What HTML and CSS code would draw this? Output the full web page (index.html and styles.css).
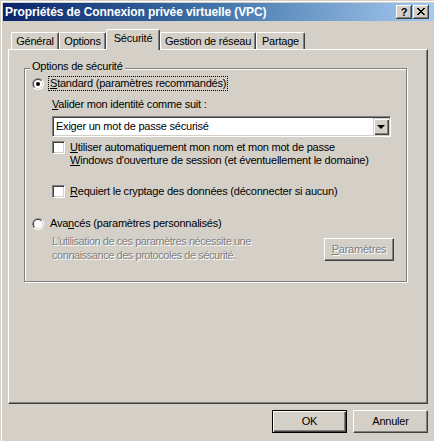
FILE: index.html
```html
<!DOCTYPE html>
<html lang="fr">
<head>
<meta charset="utf-8">
<title>Propriétés de Connexion privée virtuelle (VPC)</title>
<link rel="stylesheet" href="styles.css">
</head>
<body>
<div class="window">
  <div class="titlebar">
    <span class="title">Propriétés de Connexion privée virtuelle (VPC)</span>
    <div class="caption-btns">
      <span class="cbtn help">?</span>
      <span class="cbtn close"><svg width="8" height="7" viewBox="0 0 8 7" shape-rendering="crispEdges"><path d="M0 0h2v1h-2zM6 0h2v1h-2zM1 1h2v1h-2zM5 1h2v1h-2zM2 2h4v1h-4zM3 3h2v1h-2zM2 4h4v1h-4zM1 5h2v1h-2zM5 5h2v1h-2zM0 6h2v1h-2zM6 6h2v1h-2z" fill="#000"/></svg></span>
    </div>
  </div>

  <div class="tabs">
    <div class="tab t1">Général</div>
    <div class="tab t2">Options</div>
    <div class="tab t3 selected">Sécurité</div>
    <div class="tab t4">Gestion de réseau</div>
    <div class="tab t5">Partage</div>
  </div>

  <div class="panel">
    <div class="group">
      <div class="legend">Options de sécurité</div>

      <div class="radio-row first">
        <svg class="radio" width="12" height="12" viewBox="0 0 12 12">
          <circle cx="6" cy="6" r="6" fill="#fff"/>
          <path d="M1.757 10.243 A6 6 0 0 1 10.243 1.757 Z" fill="#808080"/>
          <circle cx="6" cy="6" r="5" fill="#d4d0c8"/>
          <path d="M2.464 9.536 A5 5 0 0 1 9.536 2.464 Z" fill="#404040"/>
          <circle cx="6" cy="6" r="4" fill="#fff"/>
          <circle cx="6" cy="6" r="2" fill="#000"/>
        </svg>
        <span class="label focus"><u>S</u>tandard (paramètres recommandés)</span>
      </div>

      <div class="valider"><u>V</u>alider mon identité comme suit :</div>

      <div class="combo">
        <span class="combo-text">Exiger un mot de passe sécurisé</span>
        <span class="combo-btn"><span class="tri"></span></span>
      </div>

      <div class="check-row c1">
        <span class="checkbox"></span>
        <span class="check-label"><u>U</u>tiliser automatiquement mon nom et mon mot de passe<br><u>W</u>indows d'ouverture de session (et éventuellement le domaine)</span>
      </div>

      <div class="check-row c2">
        <span class="checkbox"></span>
        <span class="check-label"><u>R</u>equiert le cryptage des données (déconnecter si aucun)</span>
      </div>

      <div class="radio-row second">
        <svg class="radio" width="12" height="12" viewBox="0 0 12 12">
          <circle cx="6" cy="6" r="6" fill="#fff"/>
          <path d="M1.757 10.243 A6 6 0 0 1 10.243 1.757 Z" fill="#808080"/>
          <circle cx="6" cy="6" r="5" fill="#d4d0c8"/>
          <path d="M2.464 9.536 A5 5 0 0 1 9.536 2.464 Z" fill="#404040"/>
          <circle cx="6" cy="6" r="4" fill="#fff"/>
        </svg>
        <span class="label">Ava<u>n</u>cés (paramètres personnalisés)</span>
      </div>

      <div class="adv">
        <div class="disabled-text">L'utilisation de ces paramètres nécessite une<br>connaissance des protocoles de sécurité.</div>
        <div class="btn params"><span class="disabled-text"><u>P</u>aramètres</span></div>
      </div>
    </div>
  </div>

  <div class="footer">
    <div class="btn default">OK</div>
    <div class="btn">Annuler</div>
  </div>
</div>
</body>
</html>
```

FILE: styles.css
```css
* { box-sizing: border-box; }
html, body { margin: 0; padding: 0; }
body {
  width: 434px;
  height: 441px;
  overflow: hidden;
  background: #d4d0c8;
  font-family: "Liberation Sans", Arial, sans-serif;
  font-size: 11px;
  line-height: 13px;
  letter-spacing: -0.22px;
  color: #000;
}
u { text-decoration: underline; text-underline-offset: 1px; }

.window {
  width: 434px;
  height: 441px;
  padding: 3px 0 0 3px;
  box-shadow: inset 1px 1px 0 #d4d0c8, inset 2px 2px 0 #fff;
}

/* Title bar */
.titlebar {
  height: 18px;
  display: flex;
  align-items: flex-start;
  background: linear-gradient(to right, #0a246a 0%, #3a6ea5 45%, #a6caf0 100%);
}
.title {
  color: #fff;
  font-weight: bold;
  font-size: 12px;
  letter-spacing: -0.1px;
  line-height: 18px;
  padding-left: 2px;
}
.caption-btns {
  margin-left: auto;
  margin-right: 5px;
  margin-top: 2px;
  display: flex;
  gap: 1px;
}
.cbtn {
  width: 16px;
  height: 14px;
  background: #d4d0c8;
  box-shadow: inset -1px -1px 0 #404040, inset 1px 1px 0 #fff, inset -2px -2px 0 #808080;
  display: flex;
  align-items: center;
  justify-content: center;
  letter-spacing: 0;
}
.help {
  font-weight: bold;
  font-size: 11px;
  line-height: 14px;
  padding-bottom: 1px;
}
.close svg { display: block; margin-top: -1px; }

/* Tabs */
.tabs {
  position: relative;
  z-index: 1;
  display: flex;
  align-items: flex-end;
  height: 20px;
  margin-top: 8px;
  padding-left: 8px;
}
.tab {
  height: 17px;
  background: #d4d0c8;
  border-top: 1px solid #fff;
  border-left: 1px solid #fff;
  border-right: 1px solid #404040;
  border-radius: 2px 2px 0 0;
  box-shadow: inset -1px 0 0 #808080;
  text-align: center;
  padding-top: 2px;
  white-space: nowrap;
}
.t1 { width: 48px; }
.t2 { width: 47px; }
.t3 { width: 54px; }
.t4 { width: 96px; }
.t5 { width: 49px; }
.tab.selected {
  height: 21px;
  margin-bottom: -1px;
}

/* Panel */
.panel {
  margin-left: 5px;
  width: 420px;
  height: 355px;
  border-top: 1px solid #fff;
  border-left: 1px solid #fff;
  border-right: 1px solid #404040;
  border-bottom: 1px solid #404040;
  box-shadow: inset -1px -1px 0 #808080;
  padding-top: 18px;
}

/* Group box */
.group {
  margin: 0 20px 0 15px;
  border: 1px solid #808080;
  box-shadow: inset 1px 1px 0 #fff, 1px 1px 0 #fff;
  padding-bottom: 19px;
}
.legend {
  width: fit-content;
  margin: -9px 0 0 5px;
  padding: 0 2px;
  background: #d4d0c8;
}

.radio-row {
  display: flex;
  align-items: center;
  height: 13px;
  margin-left: 7px;
}
.radio-row.first { margin-top: 4px; }
.radio-row.second { margin-top: 19px; }
.radio { display: block; flex: none; }
.label { margin-left: 5px; padding: 0 1px; }
.label.focus { outline: 1px dotted #000; outline-offset: 0; }

.valider { margin: 8px 0 0 27px; }

.combo {
  display: flex;
  width: 339px;
  height: 21px;
  margin: 5px 0 0 27px;
  background: #fff;
  border: 1px solid;
  border-color: #808080 #fff #fff #808080;
  box-shadow: inset 1px 1px 0 #404040, inset -1px -1px 0 #d4d0c8;
  padding: 1px;
}
.combo-text {
  flex: 1;
  padding-left: 2px;
  line-height: 16px;
}
.combo-btn {
  width: 16px;
  height: 17px;
  background: #d4d0c8;
  box-shadow: inset 1px 1px 0 #d4d0c8, inset 2px 2px 0 #fff, inset -1px -1px 0 #404040, inset -2px -2px 0 #808080;
  display: flex;
  align-items: center;
  justify-content: center;
}
.tri {
  width: 0;
  height: 0;
  border-left: 4px solid transparent;
  border-right: 4px solid transparent;
  border-top: 4px solid #000;
  margin-top: 1px;
}

.check-row {
  display: flex;
  align-items: flex-start;
  margin-left: 27px;
}
.check-row.c1 { margin-top: 4px; }
.check-row.c2 { margin-top: 18px; }
.checkbox {
  flex: none;
  width: 13px;
  height: 13px;
  background: #fff;
  border: 1px solid;
  border-color: #808080 #fff #fff #808080;
  box-shadow: inset 1px 1px 0 #404040, inset -1px -1px 0 #d4d0c8;
}
.check-label { margin-left: 5px; }

.adv {
  display: flex;
  align-items: flex-start;
  margin: 4px 12px 0 27px;
}
.adv > .disabled-text { line-height: 14px; letter-spacing: -0.45px; }
.disabled-text {
  color: #808080;
  text-shadow: 1px 1px 0 #fff;
}

.btn {
  width: 75px;
  height: 23px;
  background: #d4d0c8;
  border: 1px solid;
  border-color: #fff #404040 #404040 #fff;
  box-shadow: inset -1px -1px 0 #808080;
  display: flex;
  align-items: center;
  justify-content: center;
}
.btn.params {
  width: 70px;
  margin-left: auto;
  margin-top: 4px;
}
.btn.default {
  border-color: #000;
  box-shadow: inset 1px 1px 0 #fff, inset -1px -1px 0 #404040, inset -2px -2px 0 #808080;
}

.footer {
  display: flex;
  justify-content: flex-end;
  gap: 6px;
  margin-top: 6px;
  margin-right: 6px;
}
```
